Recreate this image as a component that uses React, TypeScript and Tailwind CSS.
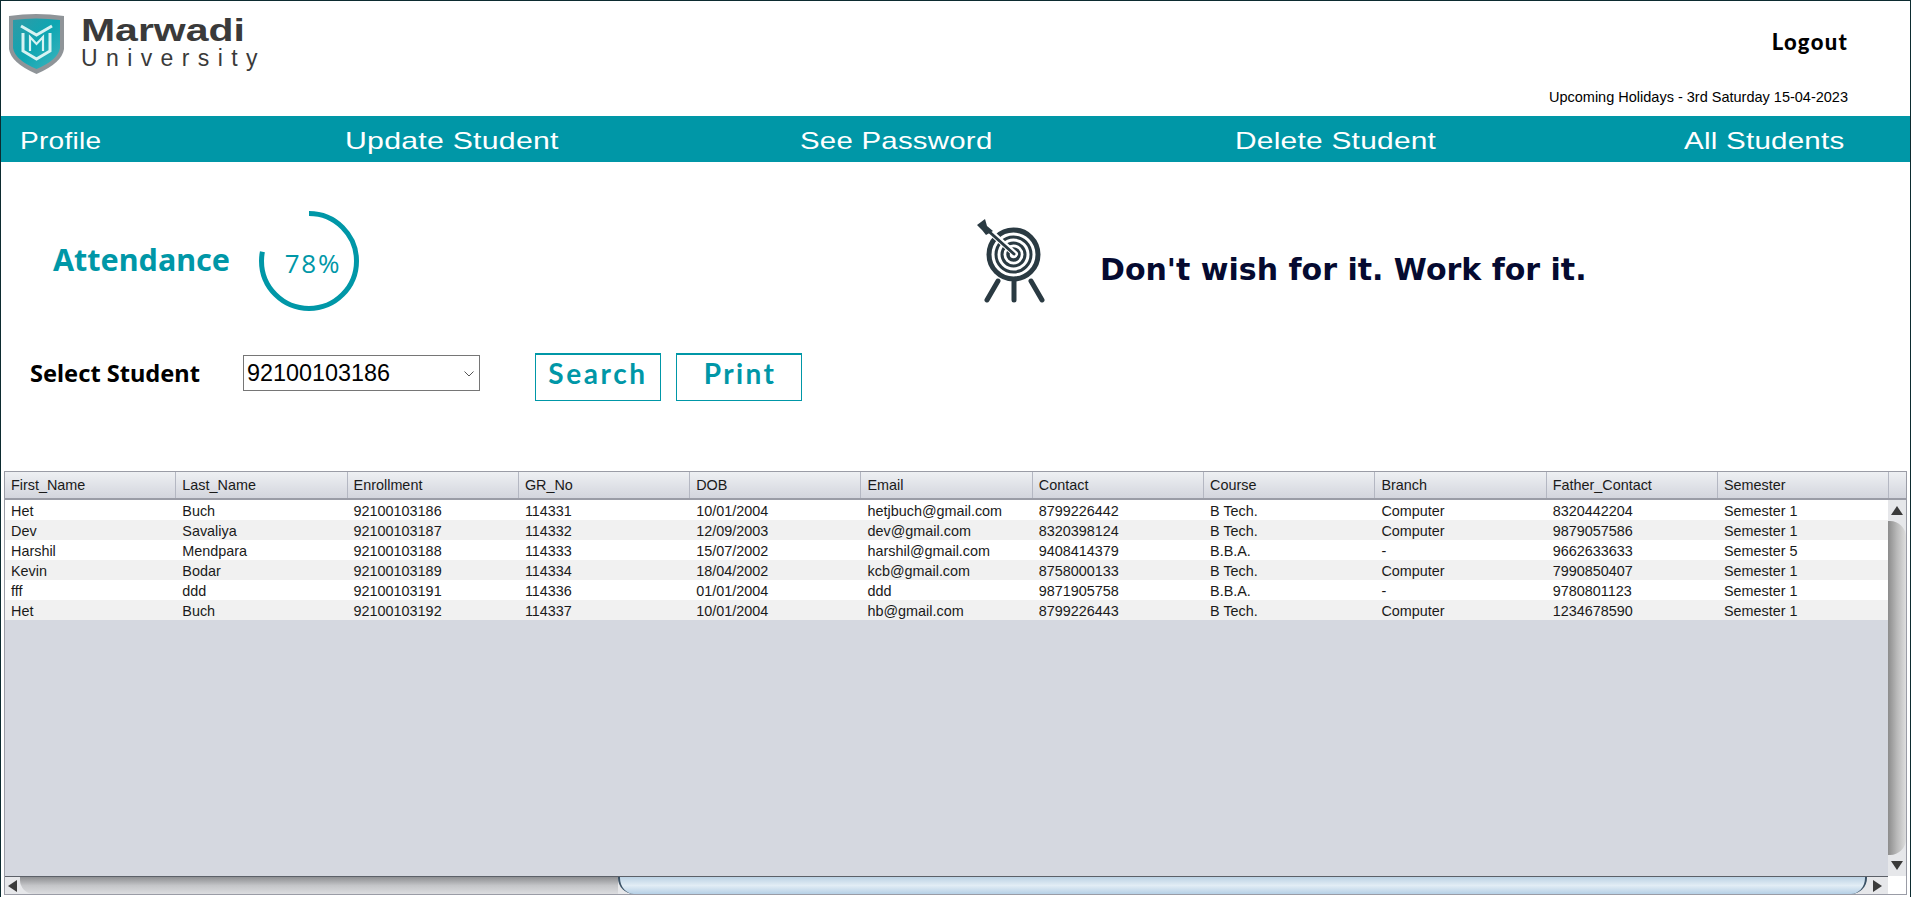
import React from "react";

const cols = ["First_Name","Last_Name","Enrollment","GR_No","DOB","Email","Contact","Course","Branch","Father_Contact","Semester"];
const rows = [
  ["Het","Buch","92100103186","114331","10/01/2004","hetjbuch@gmail.com","8799226442","B Tech.","Computer","8320442204","Semester 1"],
  ["Dev","Savaliya","92100103187","114332","12/09/2003","dev@gmail.com","8320398124","B Tech.","Computer","9879057586","Semester 1"],
  ["Harshil","Mendpara","92100103188","114333","15/07/2002","harshil@gmail.com","9408414379","B.B.A.","-","9662633633","Semester 5"],
  ["Kevin","Bodar","92100103189","114334","18/04/2002","kcb@gmail.com","8758000133","B Tech.","Computer","7990850407","Semester 1"],
  ["fff","ddd","92100103191","114336","01/01/2004","ddd","9871905758","B.B.A.","-","9780801123","Semester 1"],
  ["Het","Buch","92100103192","114337","10/01/2004","hb@gmail.com","8799226443","B Tech.","Computer","1234678590","Semester 1"],
];

function Shield() {
  return (
    <svg width="57" height="62" viewBox="0 0 57 62" className="shrink-0">
      <defs>
        <linearGradient id="sh" x1="0" y1="0" x2="1" y2="1">
          <stop offset="0" stopColor="#2f9aa6" />
          <stop offset="0.5" stopColor="#0ea6b2" />
          <stop offset="1" stopColor="#3fb4bd" />
        </linearGradient>
      </defs>
      <path d="M1 3 Q28 -1 56 3 L56 36 Q54 50 28.5 61 Q3 50 1 36 Z" fill="#8f9498" />
      <path d="M5 7 Q28 4 52 7 L52 35 Q50 47 28.5 56 Q7 47 5 35 Z" fill="url(#sh)" />
      <g fill="none" stroke="#d8f3f3" strokeWidth="3">
        <path d="M13 13 L28.5 22 L44 13" />
        <path d="M15 20 L15 38 L28.5 46 L42 38 L42 20" />
        <path d="M22 38 L22 24 L28.5 31 L35 24 L35 38" strokeWidth="2.2" />
      </g>
    </svg>
  );
}

function Target() {
  return (
    <svg width="70" height="84" viewBox="0 0 70 84" className="shrink-0">
      <g fill="none" stroke="#2a3a42" strokeLinecap="round">
        <circle cx="37.5" cy="35.5" r="24.5" strokeWidth="5" />
        <circle cx="37.5" cy="35.5" r="17.5" strokeWidth="3" />
        <circle cx="37.5" cy="35.5" r="11.5" strokeWidth="3" />
        <circle cx="37.5" cy="35.5" r="5.5" strokeWidth="3.5" />
        <path d="M10 10 L38 35" strokeWidth="6" stroke="#ffffff" transform="translate(1 0)" />
        <path d="M8 8 L38 35" strokeWidth="3" />
        <path d="M22 62 L11 81" strokeWidth="5" />
        <path d="M38 63 L38 81" strokeWidth="5" />
        <path d="M55 62 L66 81" strokeWidth="5" />
      </g>
      <path d="M1 6 L9 0 L11 7 L17 12 L10 16 L6 11 Z" fill="#2a3a42" />
    </svg>
  );
}

function Ring() {
  const r = 47.5;
  const c = 2 * Math.PI * r;
  return (
    <div className="relative w-[100px] h-[100px] shrink-0 flex items-center justify-center">
      <svg width="100" height="100" viewBox="0 0 100 100" className="absolute inset-0 -rotate-90">
        <circle cx="50" cy="50" r={r} fill="none" stroke="#0097a7" strokeWidth="5" strokeDasharray={`${c * 0.78} ${c}`} />
      </svg>
      <span className="text-[26px] leading-none tracking-[1.8px] text-[#0097a7] font-['Open_Sans',sans-serif] mt-[4px] ml-[8px]">78%</span>
    </div>
  );
}

export default function App() {
  return (
    <div className="w-[1911px] h-[897px] overflow-hidden bg-[#0c2b30] pt-px px-px">
      <div className="h-[896px] bg-white flex flex-col">
        {/* Header */}
        <div className="h-[115px] flex justify-between shrink-0">
          <div className="flex pl-[7px] pt-[12px] items-start">
            <Shield />
            <div className="ml-[16px] text-[#3a3a3a] font-['Liberation_Sans',sans-serif] mt-[2px]">
              <div className="text-[32px] leading-[31px] font-bold scale-x-[1.28] origin-left whitespace-nowrap">Marwadi</div>
              <div className="text-[23px] leading-[24px] tracking-[8.4px]">University</div>
            </div>
          </div>
          <div className="flex flex-col items-end pr-[62px] font-['Liberation_Sans',sans-serif] text-black">
            <div className="mt-[27px] text-[22px] leading-[28px] font-black tracking-[1.3px] font-['Lato',sans-serif]">Logout</div>
            <div className="mt-[32px] text-[14.5px] leading-[18px]">Upcoming Holidays - 3rd Saturday 15-04-2023</div>
          </div>
        </div>

        {/* Nav */}
        <div className="h-[46px] shrink-0 bg-[#0097a7] flex items-center pl-[19px] pt-[3px] text-white text-[24px] tracking-[0.2px] font-['Liberation_Sans',sans-serif]">
          <span className="w-[325px] shrink-0 whitespace-nowrap origin-left scale-x-[1.17]">Profile</span>
          <span className="w-[455px] shrink-0 whitespace-nowrap origin-left scale-x-[1.26]">Update Student</span>
          <span className="w-[435px] shrink-0 whitespace-nowrap origin-left scale-x-[1.225]">See Password</span>
          <span className="w-[449px] shrink-0 whitespace-nowrap origin-left scale-x-[1.245]">Delete Student</span>
          <span className="shrink-0 whitespace-nowrap origin-left scale-x-[1.23]">All Students</span>
        </div>

        {/* Attendance + quote */}
        <div className="mt-[49px] h-[100px] flex items-center shrink-0">
          <span className="ml-[52px] w-[206px] text-[30.5px] leading-none font-bold text-[#0097a7] font-['Noto_Sans',sans-serif] mb-[4px]">Attendance</span>
          <Ring />
          <div className="ml-[617px]"><Target /></div>
          <span className="ml-[54px] mt-[18px] text-[30px] leading-none font-bold text-[#050a30] font-['DejaVu_Sans',sans-serif]">Don't wish for it. Work for it.</span>
        </div>

        {/* Select row */}
        <div className="mt-[42px] h-[48px] flex items-start shrink-0">
          <span className="ml-[29px] w-[213px] mt-[2px] text-[23.6px] leading-[36px] font-bold text-black font-['Noto_Sans',sans-serif]">Select Student</span>
          <div className="mt-[2px] w-[237px] h-[36px] border border-[#767676] bg-white flex items-center justify-between pl-[3px] pr-[5px] pt-[1px] text-[23.4px] text-black font-['Liberation_Sans',sans-serif]">
            <span>92100103186</span>
            <svg width="10" height="6" viewBox="0 0 10 6" className="mt-[1px]"><path d="M0.5 0.5 L5 5 L9.5 0.5" fill="none" stroke="#555" strokeWidth="1" /></svg>
          </div>
          <div className="ml-[55px] w-[126px] h-[48px] border border-t-2 border-[#0097a7] flex items-center justify-center pb-[9px] text-[28px] font-bold tracking-[2.6px] text-[#0097a7] font-['Lato',sans-serif]">Search</div>
          <div className="ml-[15px] w-[126px] h-[48px] border border-t-2 border-[#0097a7] flex items-center justify-center pb-[9px] pl-[2px] text-[28px] font-bold tracking-[2.4px] text-[#0097a7] font-['Lato',sans-serif]">Print</div>
        </div>

        {/* Table */}
        <div className="mt-[70px] ml-[3px] mr-[3px] mb-[2px] flex-1 min-h-0 border border-[#9a9ca6] flex flex-col font-['Liberation_Sans',sans-serif] text-[14.4px] text-[#1a1a1a]">
          <div className="h-[28px] shrink-0 flex border-b-2 border-[#9a9ca6] bg-gradient-to-b from-[#eef0f3] to-[#d3d5dd]">
            {cols.map((c) => (
              <div key={c} className="w-[171.3px] shrink-0 pl-[6px] border-r border-[#b4b7c2] leading-[27px]">{c}</div>
            ))}
            <div className="flex-1" />
          </div>
          <div className="flex-1 min-h-0 flex">
            <div className="flex-1 min-w-0 bg-[#d5d8e0]">
              {rows.map((r, i) => (
                <div key={i} className={`h-[20px] flex ${i % 2 === 0 ? "bg-white" : "bg-[#f1f1f1]"}`}>
                  {r.map((v, j) => (
                    <div key={j} className="w-[171.3px] h-[20px] shrink-0 pl-[6px] pt-px leading-[20px] whitespace-nowrap">{v}</div>
                  ))}
                </div>
              ))}
            </div>
            {/* vertical scrollbar */}
            <div className="w-[18px] shrink-0 flex flex-col bg-[#e6e7ea]">
              <div className="h-[21px] shrink-0 flex items-center justify-center">
                <div className="w-0 h-0 border-l-[6px] border-r-[6px] border-b-[9px] border-l-transparent border-r-transparent border-b-[#3a3a3a]" />
              </div>
              <div className="flex-1 rounded-tr-[16px] rounded-br-[16px] bg-gradient-to-r from-[#8c8c8c] via-[#b9b9b9] to-[#dedede]" />
              <div className="h-[21px] shrink-0 flex items-center justify-center">
                <div className="w-0 h-0 border-l-[6px] border-r-[6px] border-t-[9px] border-l-transparent border-r-transparent border-t-[#3a3a3a]" />
              </div>
            </div>
          </div>
          {/* horizontal scrollbar */}
          <div className="h-[18px] shrink-0 flex">
            <div className="flex-1 min-w-0 flex bg-[#e6e7ea] border-t border-[#5c6068]">
              <div className="w-[15px] shrink-0 flex items-center justify-center">
                <div className="w-0 h-0 border-t-[6px] border-b-[6px] border-r-[9px] border-t-transparent border-b-transparent border-r-[#3a3a3a]" />
              </div>
              <div className="w-[598px] shrink-0 rounded-bl-[14px] bg-gradient-to-b from-[#8e8f92] via-[#c4c5c8] to-[#dcdde0]" />
              <div className="flex-1 min-w-0 rounded-bl-[16px] rounded-br-[16px] border-l-2 border-r-2 border-[#3b5266] bg-gradient-to-b from-[#bcd2e4] via-[#e2edf5] to-[#b6d0e6]" />
              <div className="w-[21px] shrink-0 flex items-center justify-center">
                <div className="w-0 h-0 border-t-[6px] border-b-[6px] border-l-[9px] border-t-transparent border-b-transparent border-l-[#3a3a3a]" />
              </div>
            </div>
            <div className="w-[18px] shrink-0 bg-white" />
          </div>
        </div>
      </div>
    </div>
  );
}
